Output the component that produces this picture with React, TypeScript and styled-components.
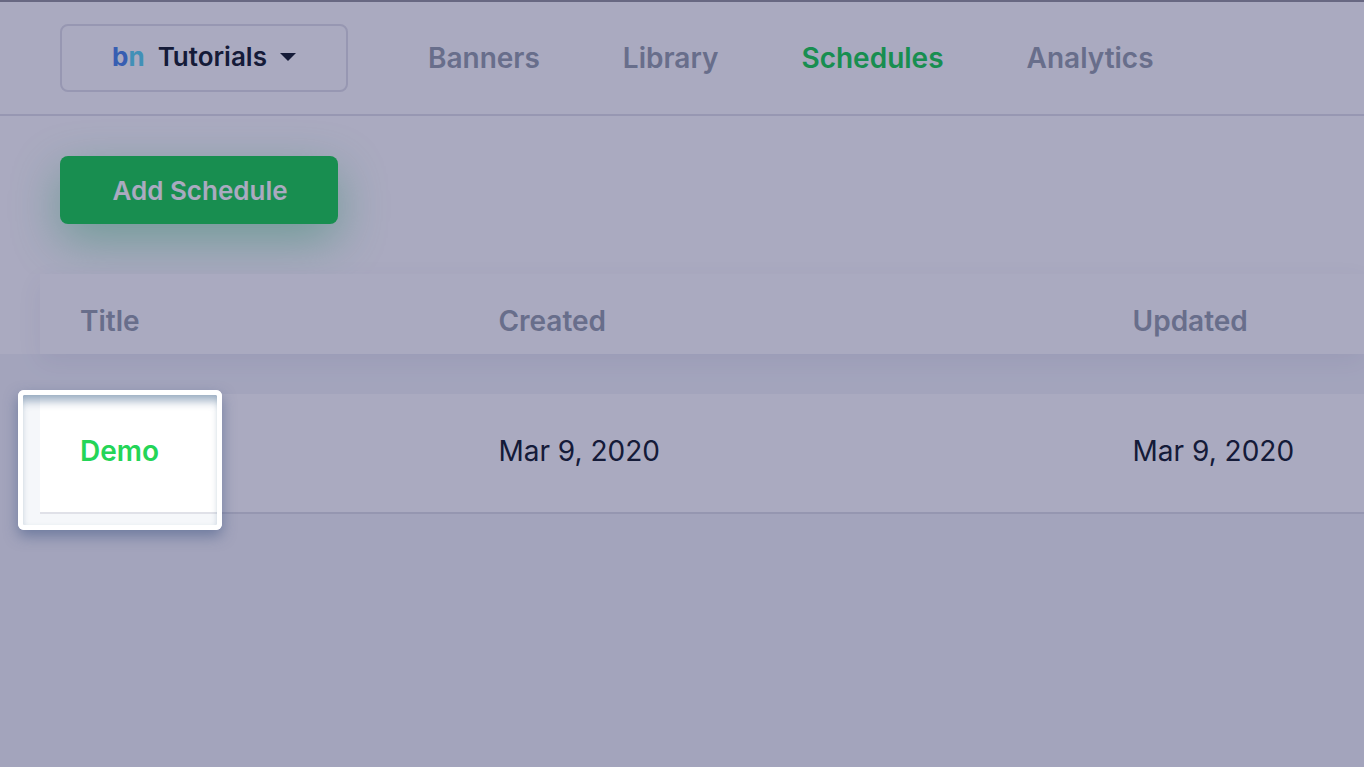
import React from 'react';
import styled, { createGlobalStyle } from 'styled-components';

const color = {
  ink: '#202933',
  muted: '#9ca5b0',
  green: '#24d557',
  line: '#e3e3ea',
  canvas: '#f5f7fa',
};

const GlobalStyle = createGlobalStyle`
  *, *::before, *::after { box-sizing: border-box; }
  body {
    margin: 0;
    background: ${color.canvas};
    color: ${color.ink};
    font-family: Inter, "Liberation Sans", sans-serif;
    font-size: 28px;
    line-height: 36px;
  }
`;

const Page = styled.div`
  min-height: 100vh;
  overflow: hidden;
  background: ${color.canvas};
`;

const Header = styled.header`
  display: flex;
  align-items: center;
  gap: 80px;
  padding: 22px 60px;
  background: #fff;
  border-top: 2px solid #9d9da2;
  border-bottom: 2px solid ${color.line};
`;

const TeamButton = styled.button`
  display: flex;
  align-items: center;
  justify-content: center;
  gap: 13px;
  flex: none;
  width: 288px;
  height: 68px;
  padding: 0 0 2px;
  background: #fff;
  border: 2px solid ${color.line};
  border-radius: 8px;
  color: ${color.ink};
  font: 600 26px/36px Inter, "Liberation Sans", sans-serif;
`;

const Logo = styled.span`
  color: #538dea;
  font-weight: 700;
`;

const LogoEnd = styled.span`
  color: #62d9f2;
`;

const Nav = styled.nav`
  display: flex;
  gap: 83px;
`;

const NavLink = styled.a<{ $active?: boolean }>`
  color: ${(p) => (p.$active ? color.green : color.muted)};
  font-weight: 600;
  text-decoration: none;
`;

const Toolbar = styled.div`
  padding: 40px 60px 50px;
  background: #fff;
`;

const AddButton = styled.button`
  display: block;
  width: 278px;
  height: 68px;
  padding: 2px 0 0 2px;
  border: 0;
  border-radius: 8px;
  background: ${color.green};
  box-shadow: 0 16px 48px rgba(34, 200, 100, 0.4);
  color: #fff;
  font: 600 26px/36px Inter, "Liberation Sans", sans-serif;
`;

const TableArea = styled.main`
  padding-left: 40px;
  background: linear-gradient(#fff 80px, ${color.canvas} 80px);
`;

const Table = styled.table`
  width: 100%;
  table-layout: fixed;
  border-collapse: separate;
  border-spacing: 0;

  tbody::before {
    content: '';
    display: block;
    height: 40px;
  }
`;

const HeadRow = styled.tr`
  background: #fff;
  box-shadow: 0 8px 24px rgba(70, 60, 130, 0.07);
`;

const HeadCell = styled.th<{ $width?: string }>`
  width: ${(p) => p.$width ?? 'auto'};
  height: 80px;
  padding: 14px 0 0 40px;
  color: ${color.muted};
  font-weight: 600;
  text-align: left;
`;

const Cell = styled.td`
  position: relative;
  height: 120px;
  padding: 0 0 4px 40px;
  background: #fff;
  border-bottom: 2px solid #e0e1e8;
`;

const TitleLink = styled.a`
  color: ${color.green};
  font-weight: 600;
  text-decoration: none;
`;

/* Frame round the highlighted cell; its widest shadow dims the rest of the page. */
const Spotlight = styled.span`
  position: absolute;
  z-index: 1;
  top: -4px;
  left: -22px;
  width: 204px;
  height: 140px;
  border: 5px solid #fff;
  border-radius: 6px;
  box-shadow:
    inset 0 10px 10px -4px rgba(40, 80, 125, 0.45),
    inset 0 0 4px rgba(40, 80, 125, 0.06),
    0 6px 14px rgba(58, 82, 130, 0.5),
    0 0 0 200vmax rgba(0, 0, 66, 0.333);
  pointer-events: none;
`;

const navItems = ['Banners', 'Library', 'Schedules', 'Analytics'];
const schedules = [{ title: 'Demo', created: 'Mar 9, 2020', updated: 'Mar 9, 2020' }];

export default function App() {
  return (
    <Page>
      <GlobalStyle />
      <Header>
        <TeamButton type="button" aria-haspopup="menu">
          <Logo>
            b<LogoEnd>n</LogoEnd>
          </Logo>
          Tutorials
          <svg width="16" height="8" viewBox="0 0 16 8" aria-hidden="true">
            <path d="M0 0h16L8 8z" fill="currentColor" />
          </svg>
        </TeamButton>
        <Nav>
          {navItems.map((item) => (
            <NavLink key={item} href="#" $active={item === 'Schedules'}>
              {item}
            </NavLink>
          ))}
        </Nav>
      </Header>
      <Toolbar>
        <AddButton type="button">Add Schedule</AddButton>
      </Toolbar>
      <TableArea>
        <Table>
          <thead>
            <HeadRow>
              <HeadCell $width="31.6%">Title</HeadCell>
              <HeadCell $width="47.9%">Created</HeadCell>
              <HeadCell>Updated</HeadCell>
            </HeadRow>
          </thead>
          <tbody>
            {schedules.map((row) => (
              <tr key={row.title}>
                <Cell>
                  <TitleLink href="#">{row.title}</TitleLink>
                  <Spotlight />
                </Cell>
                <Cell>{row.created}</Cell>
                <Cell>{row.updated}</Cell>
              </tr>
            ))}
          </tbody>
        </Table>
      </TableArea>
    </Page>
  );
}
